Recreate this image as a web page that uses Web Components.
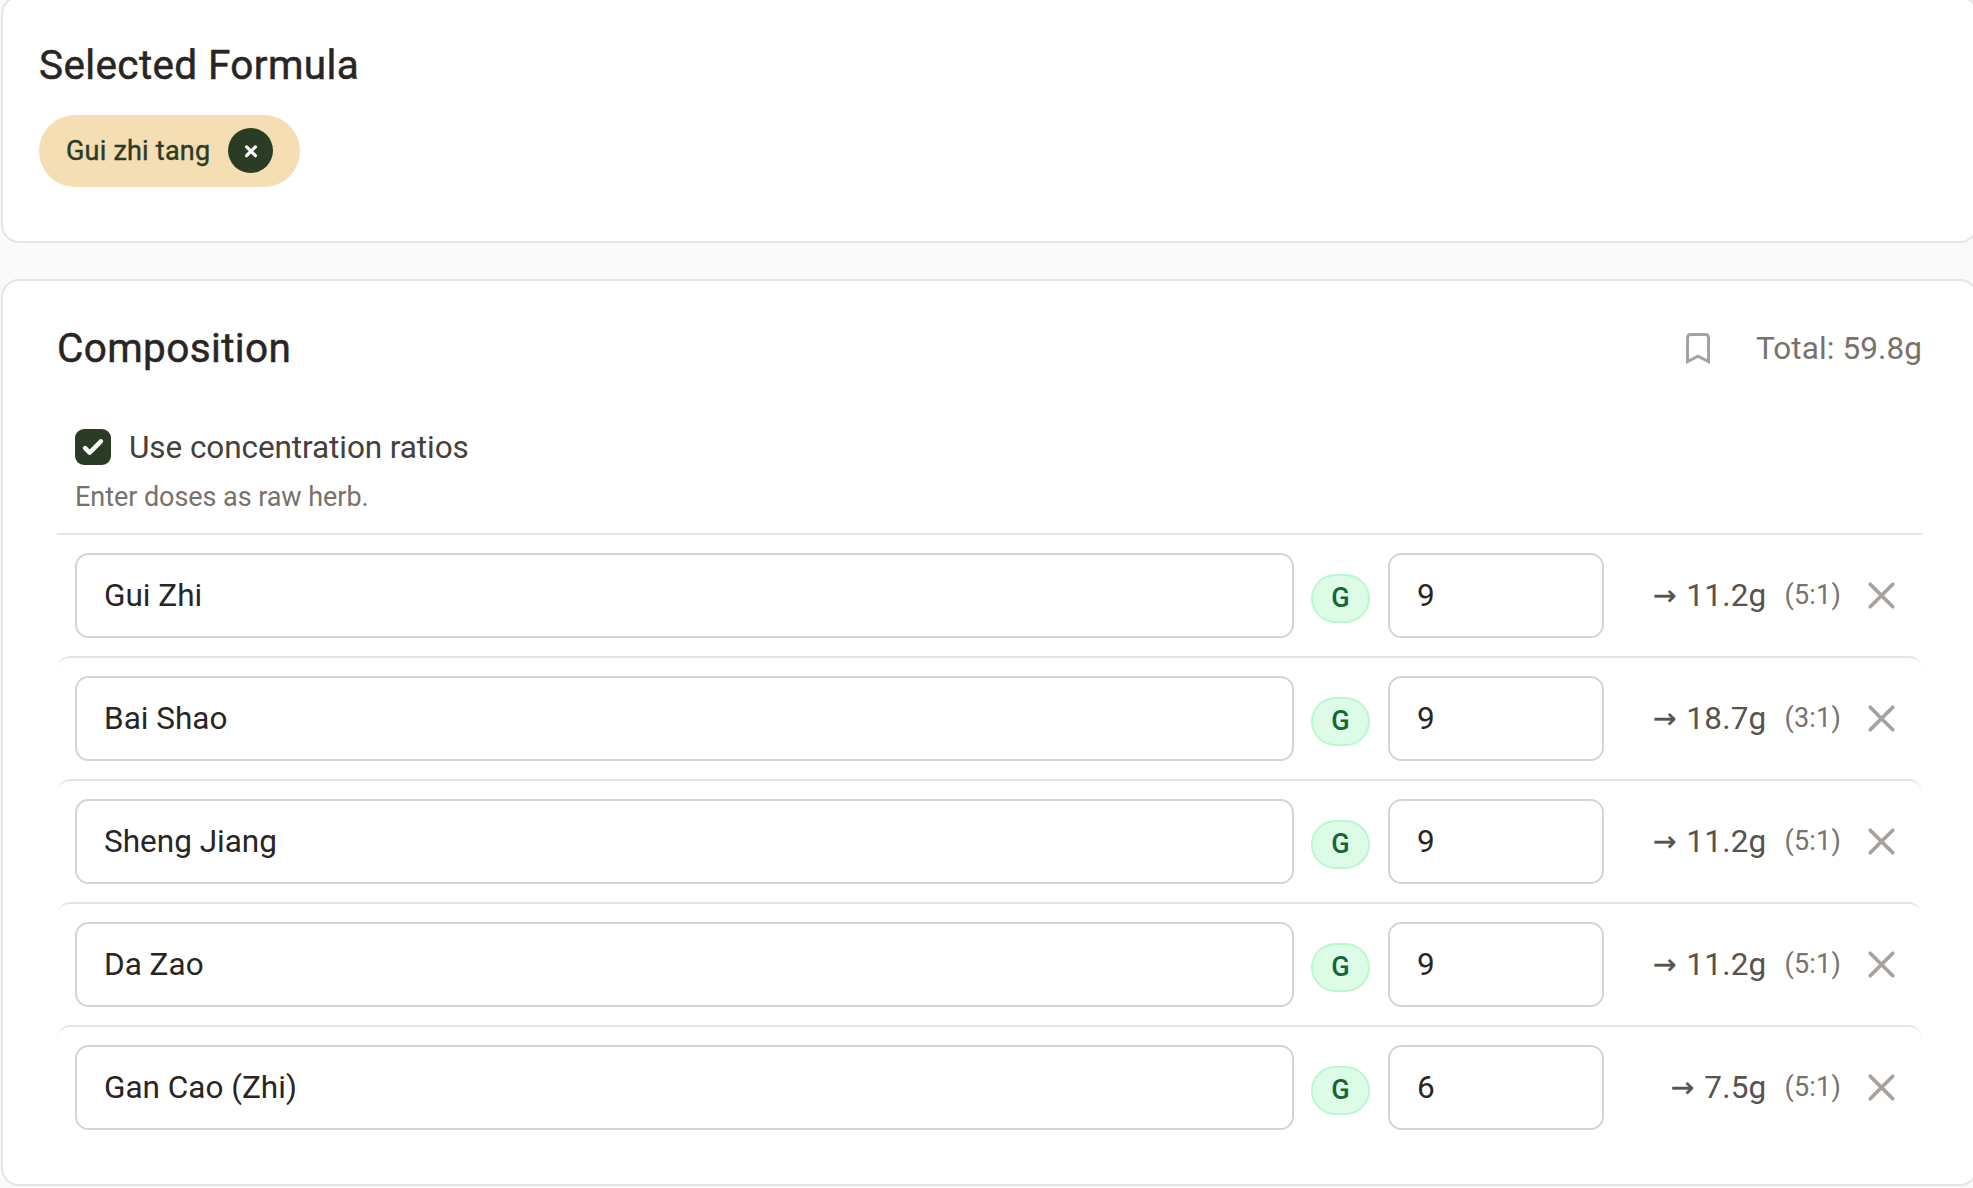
<!DOCTYPE html>
<html lang="en">
<head>
  <meta charset="utf-8">
  <title>Formula composition</title>
  <style>
    html {
      background: #fafafa;
      overflow: hidden;
    }

    body {
      margin: 0;
      font-family: Roboto, "Liberation Sans", sans-serif;
      color: #292524;
    }
  </style>
</head>
<body>
  <formula-page></formula-page>

  <script>
    /**
     * Create a template element from markup.
     *
     * @param {string} html - The styles and markup.
     * @returns {HTMLTemplateElement} The template.
     */
    function createTemplate (html) {
      const template = document.createElement('template')
      template.innerHTML = html
      return template
    }

    /**
     * Base class that clones the template of the element into an open shadow root.
     */
    class TemplateElement extends HTMLElement {
      constructor () {
        super()
        this.attachShadow({ mode: 'open' })
          .appendChild(this.constructor.template.content.cloneNode(true))
      }
    }

    // White bordered card, content is slotted.
    customElements.define('panel-card', class extends TemplateElement {
      static template = createTemplate(`
        <style>
          :host {
            display: block;
            box-sizing: border-box;
            padding: 36px;
            background: #fff;
            border: 2px solid #e5e5e5;
            border-radius: 18px;
          }
        </style>
        <slot></slot>
      `)
    })

    customElements.define('section-title', class extends TemplateElement {
      static template = createTemplate(`
        <style>
          :host {
            display: block;
          }

          h2 {
            margin: 0;
            font-size: 40.5px;
            line-height: 63px;
            font-weight: 400;
            letter-spacing: 0.37px;
            -webkit-text-stroke: 0.5px;
          }
        </style>
        <h2><slot></slot></h2>
      `)
    })

    customElements.define('formula-chip', class extends TemplateElement {
      static template = createTemplate(`
        <style>
          :host {
            display: inline-flex;
            box-sizing: border-box;
            align-items: center;
            gap: 18px;
            height: 72px;
            padding: 0 27px 1px;
            border-radius: 36px;
            background: #f5deb3;
            color: #2a3c24;
            font-size: 27px;
            line-height: 36px;
            letter-spacing: 0.22px;
            -webkit-text-stroke: 0.4px;
          }

          button {
            display: flex;
            align-items: center;
            justify-content: center;
            width: 45px;
            height: 45px;
            padding: 0;
            border: 0;
            border-radius: 50%;
            background: #2a3c24;
          }
        </style>
        <span><slot></slot></span>
        <button aria-label="Remove formula">
          <svg width="14" height="14" viewBox="0 0 14 14" fill="none" stroke="#fff" stroke-width="3.2" stroke-linecap="round">
            <path d="M2.6 2.9l8.8 8.8M11.4 2.9l-8.8 8.8"/>
          </svg>
        </button>
      `)
    })

    customElements.define('ratio-toggle', class extends TemplateElement {
      static template = createTemplate(`
        <style>
          :host {
            display: block;
            padding: 0 18px 18px;
          }

          label {
            display: flex;
            align-items: center;
            gap: 18px;
            height: 46px;
            font-size: 31.5px;
            line-height: 45px;
            letter-spacing: -0.08px;
            color: #44403c;
          }

          .box {
            width: 36px;
            height: 36px;
            border-radius: 9px;
            background: #2a3c24;
          }

          .box svg {
            display: block;
          }

          p {
            margin: 9px 0 0;
            font-size: 27px;
            line-height: 36px;
            letter-spacing: -0.06px;
            color: #78716c;
          }
        </style>
        <label>
          <span class="box" role="checkbox" aria-checked="true">
            <svg width="36" height="36" viewBox="0 0 16 16" fill="#fff">
              <path d="M12.207 4.793a1 1 0 010 1.414l-5 5a1 1 0 01-1.414 0l-2-2a1 1 0 011.414-1.414L6.5 9.086l4.293-4.293a1 1 0 011.414 0z"/>
            </svg>
          </span>
          <slot></slot>
        </label>
        <p><slot name="hint"></slot></p>
      `)
    })

    customElements.define('granule-badge', class extends TemplateElement {
      static template = createTemplate(`
        <style>
          :host {
            display: block;
            box-sizing: border-box;
            width: 59px;
            height: 49px;
            margin-top: 6px;
            border: 2px solid #bbf7d0;
            border-radius: 25px;
            background: #dcfce7;
            color: #166534;
            font-size: 27px;
            line-height: 45px;
            font-weight: 500;
            text-align: center;
          }
        </style>
        <slot></slot>
      `)
    })

    // One herb in the composition: name, badge, raw dose and converted dose.
    customElements.define('herb-row', class extends TemplateElement {
      static template = createTemplate(`
        <style>
          :host {
            display: grid;
            grid-template-columns: 1fr 59px 234px 255px 45px;
            align-items: center;
            padding: 18px;
            border-top: 2px solid #e5e5e5;
            border-radius: 13.5px;
          }

          :host(:first-of-type) {
            border-radius: 0;
          }

          .field {
            box-sizing: border-box;
            height: 85px;
            padding: 0 27px;
            border: 2px solid #d6d3d1;
            border-radius: 13.5px;
            background: #fff;
            font-size: 31.5px;
            line-height: 81px;
          }

          .name {
            margin-right: 17px;
          }

          .dose {
            margin-left: 18px;
          }

          .result {
            display: flex;
            align-items: center;
            justify-content: flex-end;
            font-size: 31.5px;
            line-height: 45px;
            color: #57534e;
          }

          .arrow {
            margin-right: 10px;
            font-family: "DejaVu Sans", sans-serif;
            font-size: 28px;
            -webkit-text-stroke: 0.4px;
          }

          .grams {
            letter-spacing: 0.2px;
          }

          .ratio {
            margin: 0 18px;
            font-size: 27px;
            letter-spacing: 0.2px;
            color: #78716c;
          }

          svg {
            display: block;
          }
        </style>
        <div class="field name"></div>
        <granule-badge>G</granule-badge>
        <div class="field dose"></div>
        <div class="result">
          <span class="arrow">→</span><span class="grams"></span><span class="ratio"></span>
        </div>
        <svg width="45" height="45" viewBox="0 0 24 24" fill="none" stroke="#a8a29e" stroke-width="2" stroke-linecap="round">
          <path d="M6 18L18 6M6 6l12 12"/>
        </svg>
      `)

      /**
       * Fill in the texts from the attributes.
       */
      connectedCallback () {
        for (const key of ['name', 'dose', 'grams', 'ratio']) {
          this.shadowRoot.querySelector('.' + key).textContent = this.getAttribute(key)
        }
      }
    })

    customElements.define('formula-page', class extends TemplateElement {
      static template = createTemplate(`
        <style>
          :host {
            display: flow-root;
            height: 1188px;
            overflow: hidden;
          }

          panel-card {
            width: 1977px;
            margin-left: 1px;
          }

          .selected {
            height: 247px;
            margin-top: -4px;
            margin-bottom: 36px;
          }

          formula-chip {
            margin-top: 18px;
          }

          .composition {
            padding: 36px 54px;
          }

          header {
            display: flex;
            align-items: center;
            justify-content: space-between;
            margin-bottom: 44px;
          }

          .total {
            display: flex;
            align-items: center;
            gap: 40px;
            font-size: 31.5px;
            line-height: 45px;
            letter-spacing: 0.1px;
            color: #78716c;
          }

          .total svg {
            margin-bottom: 1px;
          }
        </style>
        <panel-card class="selected">
          <section-title>Selected Formula</section-title>
          <formula-chip>Gui zhi tang</formula-chip>
        </panel-card>
        <panel-card class="composition">
          <header>
            <section-title>Composition</section-title>
            <div class="total">
              <svg width="36" height="36" viewBox="0 0 24 24" fill="none" stroke="#a8a29e" stroke-width="2">
                <path d="M5 5a2 2 0 012-2h10a2 2 0 012 2v16l-7-3.5L5 21V5z"/>
              </svg>
              <span>Total: 59.8g</span>
            </div>
          </header>
          <ratio-toggle>Use concentration ratios<span slot="hint">Enter doses as raw herb.</span></ratio-toggle>
          <herb-row name="Gui Zhi" dose="9" grams="11.2g" ratio="(5:1)"></herb-row>
          <herb-row name="Bai Shao" dose="9" grams="18.7g" ratio="(3:1)"></herb-row>
          <herb-row name="Sheng Jiang" dose="9" grams="11.2g" ratio="(5:1)"></herb-row>
          <herb-row name="Da Zao" dose="9" grams="11.2g" ratio="(5:1)"></herb-row>
          <herb-row name="Gan Cao (Zhi)" dose="6" grams="7.5g" ratio="(5:1)"></herb-row>
        </panel-card>
      `)
    })
  </script>
</body>
</html>
